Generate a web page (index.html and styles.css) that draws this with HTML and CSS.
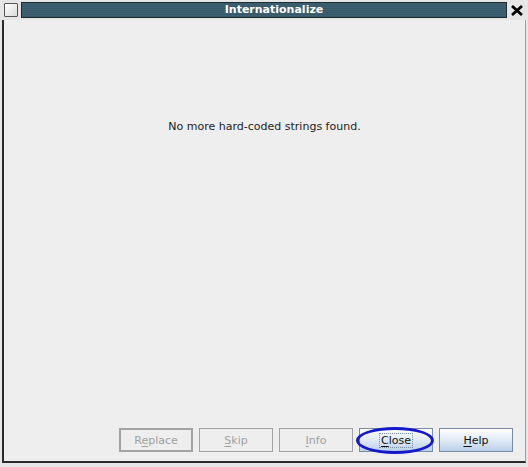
FILE: index.html
```html
<!DOCTYPE html>
<html>
<head>
<meta charset="utf-8">
<link rel="stylesheet" href="styles.css">
</head>
<body>
<div class="window">
  <div class="titlerow">
    <div class="menu-box"></div>
    <div class="titlebar"><span class="title">Internationalize</span></div>
    <div class="close-x">
      <svg width="12" height="11" viewBox="0 0 12 11"><path d="M1 1 L11 10 M11 1 L1 10" stroke="#000" stroke-width="2.8"/></svg>
    </div>
  </div>
  <div class="content">
    <div class="message">No more hard-coded strings found.</div>
    <div class="buttons">
      <button class="btn disabled default">R<u>e</u>place</button>
      <button class="btn disabled"><u>S</u>kip</button>
      <button class="btn disabled"><u>I</u>nfo</button>
      <button class="btn active focused"><span class="focus"><u>C</u>lose</span><span class="ring"></span></button>
      <button class="btn active"><u>H</u>elp</button>
    </div>
  </div>
</div>
</body>
</html>
```
FILE: styles.css
```css
html, body {
  margin: 0;
  padding: 0;
  width: 528px;
  height: 467px;
  overflow: hidden;
  background: #e6e6e6;
  font-family: "DejaVu Sans", "Liberation Sans", sans-serif;
}
.window {
  width: 528px;
  height: 467px;
  display: flex;
  flex-direction: column;
  box-sizing: border-box;
  background: #e6e6e6;
}
.titlerow {
  height: 20px;
  display: flex;
  align-items: flex-start;
  padding-top: 2px;
  box-sizing: border-box;
}
.menu-box {
  width: 12px;
  height: 12px;
  margin: 1px 0 0 4px;
  border: 1px solid #555;
  background: linear-gradient(135deg, #ffffff, #d8d8d8);
  border-radius: 1px;
}
.titlebar {
  margin-left: 3px;
  width: 486px;
  height: 16px;
  box-sizing: border-box;
  border: 1px solid #1c2a30;
  background: repeating-linear-gradient(#3f6272 0px, #3f6272 1px, #365868 1px, #365868 2px);
  display: flex;
  align-items: center;
  justify-content: center;
}
.title {
  color: #fff;
  font-weight: bold;
  font-size: 11px;
  margin-left: 20px;
  line-height: 14px;
}
.close-x {
  margin-left: 4px;
  margin-top: 3px;
  height: 11px;
}
.close-x svg { display: block; }
.content {
  flex: 1;
  margin-left: 2px;
  margin-right: 2px;
  margin-bottom: 4px;
  background: #eeeeee;
  border-left: 2px solid #2a2a2a;
  border-right: 1px solid #a0a0a0;
  border-bottom: 2px solid #2a2a2a;
  display: flex;
  flex-direction: column;
  position: relative;
}
.message {
  text-align: center;
  font-size: 11px;
  color: #222;
  margin-top: 100px;
}
.buttons {
  margin-top: auto;
  display: flex;
  justify-content: flex-end;
  gap: 6px;
  padding-right: 12px;
  padding-bottom: 9px;
}
.btn {
  width: 74px;
  height: 24px;
  box-sizing: border-box;
  font-family: "DejaVu Sans", "Liberation Sans", sans-serif;
  font-size: 11px;
  padding: 0;
  position: relative;
}
.btn u { text-decoration: underline; text-underline-offset: 2px; }
.btn.disabled {
  background: #eeeeee;
  border: 1px solid #a3a3a3;
  color: #a0a0a0;
}
.btn.disabled.default {
  border: 2px solid #a3a3a3;
}
.btn.active {
  background: linear-gradient(#ffffff, #e4edf8 45%, #bcd0e8);
  border: 1px solid #7a8ca4;
  color: #111;
}
.focus {
  outline: 1px dotted #7a8ca4;
  padding: 0 1px;
}
.ring {
  position: absolute;
  left: -4px;
  top: -2px;
  width: 78px;
  height: 27px;
  border: 3px solid #1418c8;
  border-radius: 50%;
  box-sizing: border-box;
}
```
